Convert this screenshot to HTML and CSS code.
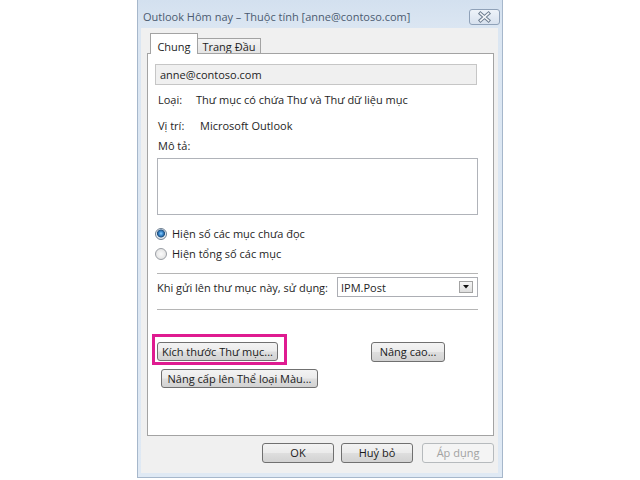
FILE: index.html
```html
<!DOCTYPE html>
<html lang="vi">
<head>
<meta charset="utf-8">
<title>Outlook Hôm nay – Thuộc tính</title>
<link rel="stylesheet" href="styles.css">
</head>
<body>
<div class="window">
  <div class="titlebar">
    <span class="title">Outlook Hôm nay – Thuộc tính [anne@contoso.com]</span>
    <span class="close">
      <svg width="31" height="16" viewBox="0 0 31 16">
        <path d="M11.5 4.5 L19.5 11.5 M19.5 4.5 L11.5 11.5" stroke="#6d7d90" stroke-width="3.6" stroke-linecap="square" fill="none"/>
        <path d="M11.5 4.5 L19.5 11.5 M19.5 4.5 L11.5 11.5" stroke="#f4f6f9" stroke-width="1.6" stroke-linecap="square" fill="none"/>
      </svg>
    </span>
  </div>
  <div class="client">
    <div class="tabs">
      <div class="tab tab-active">Chung</div>
      <div class="tab tab-idle">Trang Đầu</div>
    </div>
    <div class="panel">
      <div class="field">anne@contoso.com</div>
      <div class="info info-type"><span class="lbl lbl-type">Loại:</span><span>Thư mục có chứa Thư và Thư dữ liệu mục</span></div>
      <div class="info info-loc"><span class="lbl lbl-loc">Vị trí:</span><span>Microsoft Outlook</span></div>
      <div class="info desc-label">Mô tả:</div>
      <div class="textarea"></div>
      <div class="radio radio-first"><span class="dot dot-on"></span>Hiện số các mục chưa đọc</div>
      <div class="radio radio-second"><span class="dot"></span>Hiện tổng số các mục</div>
      <div class="sep sep-first"></div>
      <div class="post">
        <span class="post-label">Khi gửi lên thư mục này, sử dụng:</span>
        <div class="combo">
          <span>IPM.Post</span>
          <span class="combo-btn">
            <svg width="14" height="11" viewBox="0 0 14 11"><path d="M4 4 L10 4 L7 7.5 Z" fill="#111"/></svg>
          </span>
        </div>
      </div>
      <div class="sep sep-second"></div>
      <div class="btnrow">
        <div class="highlight"><span class="btn btn-size">Kích thước Thư mục...</span></div>
        <span class="btn btn-adv">Nâng cao...</span>
      </div>
      <span class="btn btn-color">Nâng cấp lên Thể loại Màu...</span>
    </div>
    <div class="footer">
      <span class="btn btn-foot">OK</span>
      <span class="btn btn-foot btn-cancel">Huỷ bỏ</span>
      <span class="btn btn-foot btn-disabled">Áp dụng</span>
    </div>
  </div>
</div>
</body>
</html>
```

FILE: styles.css
```css
html, body {
  margin: 0;
  padding: 0;
  background: #ffffff;
}

body {
  font-family: "Open Sans", "Noto Sans", "DejaVu Sans", sans-serif;
  font-size: 11px;
  color: #1e1e1e;
}

.window {
  margin-left: 137px;
  width: 366px;
  height: 478px;
  box-sizing: border-box;
  border: 1px solid #a6b7cb;
  border-top: 0;
  background: linear-gradient(#d3e0ef 0px, #dbe6f2 28px, #dfe9f4 100%);
  padding: 0 4px 4px 3px;
  display: flex;
  flex-direction: column;
}

.titlebar {
  height: 28px;
  display: flex;
  align-items: flex-start;
  justify-content: space-between;
  margin-right: -2px;
}

.title {
  margin-top: 9px;
  margin-left: 2px;
  font-size: 11px;
  line-height: 16px;
  color: #4b5b70;
}

.close {
  margin-top: 9px;
  width: 31px;
  height: 16px;
  box-sizing: border-box;
  border: 1px solid #8fa1b8;
  border-radius: 3px;
  background: linear-gradient(#eef3f9, #d7e1ee);
  display: flex;
  align-items: center;
  justify-content: center;
}

.close svg {
  display: block;
  margin: -1px;
}

.client {
  flex: 1;
  background: #f0f0f0;
  display: flex;
  flex-direction: column;
  padding: 5px 4px 0 6px;
}

.tabs {
  display: flex;
  align-items: flex-end;
  height: 20px;
  padding-left: 3px;
}

.tab {
  box-sizing: border-box;
  border: 1px solid #a3a3a3;
  border-bottom: 0;
  text-align: center;
}

.tab-active {
  width: 48px;
  height: 21px;
  margin-bottom: -1px;
  padding-top: 5px;
  line-height: 16px;
  background: #ffffff;
  position: relative;
  z-index: 1;
}

.tab-idle {
  width: 64px;
  height: 15px;
  margin-left: -1px;
  padding-top: 1px;
  line-height: 14px;
  background: linear-gradient(#f4f4f4, #e4e4e4);
}

.panel {
  flex: 1;
  background: #ffffff;
  border: 1px solid #a3a3a3;
  padding: 0 16px 0 8px;
  display: flex;
  flex-direction: column;
  align-items: flex-start;
}

.field {
  margin-top: 10px;
  margin-left: -1px;
  width: 322px;
  height: 21px;
  box-sizing: border-box;
  border: 1px solid #c6c6c6;
  background: #f0f0f0;
  padding-left: 4px;
  line-height: 19px;
}

.info {
  line-height: 16px;
  display: flex;
}

.info-type {
  margin-top: 7px;
  padding-left: 2px;
}

.info-loc {
  margin-top: 10px;
  padding-left: 2px;
}

.lbl-type {
  width: 38px;
}

.lbl-loc {
  width: 42px;
}

.desc-label {
  margin-top: 4px;
  padding-left: 2px;
}

.textarea {
  margin-top: 4px;
  margin-left: 1px;
  width: 321px;
  height: 57px;
  box-sizing: border-box;
  border: 1px solid #b0b3b9;
  background: #ffffff;
}

.radio {
  display: flex;
  align-items: center;
  line-height: 16px;
  height: 16px;
  margin-left: -1px;
}

.radio-first {
  margin-top: 11px;
}

.radio-second {
  margin-top: 4px;
}

.dot {
  width: 12px;
  height: 12px;
  box-sizing: border-box;
  border-radius: 50%;
  border: 1px solid #9a9ea4;
  background: radial-gradient(circle at 50% 50%, #fbfbfb 0, #dcdcdc 100%);
  margin-right: 5px;
}

.dot-on {
  border-color: #6d7f92;
  background: radial-gradient(circle at 50% 45%, #8fd0ff 0, #3e8fd6 1.8px, #1c4f80 3.6px, #e9eef3 4.4px, #d4dbe3 100%);
}

.sep {
  width: 321px;
  height: 0;
  margin-left: 1px;
  border-top: 1px solid #b5b5b5;
  border-bottom: 1px solid #ffffff;
}

.sep-first {
  margin-top: 11px;
}

.sep-second {
  margin-top: 12px;
}

.post {
  margin-top: 2px;
  margin-left: 1px;
  width: 321px;
  display: flex;
  align-items: center;
  justify-content: space-between;
}

.combo {
  width: 141px;
  height: 20px;
  box-sizing: border-box;
  border: 1px solid #acaeb4;
  background: #ffffff;
  display: flex;
  align-items: center;
  justify-content: space-between;
  padding: 0 4px 0 3px;
}

.combo-btn {
  width: 14px;
  height: 12px;
  box-sizing: border-box;
  border: 1px solid #a3a3a3;
  background: linear-gradient(#f6f6f6, #dedede);
  display: flex;
}

.combo-btn svg {
  display: block;
  margin: -1px;
}

.btnrow {
  margin-top: 23px;
  margin-left: -4px;
  display: flex;
  align-items: flex-start;
}

.highlight {
  width: 135px;
  height: 31px;
  box-sizing: border-box;
  border: 3px solid #df1b90;
  padding: 5px 0 0 2px;
}

.btn {
  box-sizing: border-box;
  display: flex;
  align-items: center;
  justify-content: center;
  height: 20px;
  border: 1px solid #707070;
  border-radius: 3px;
  background: linear-gradient(#f3f3f3 0%, #ebebeb 48%, #dedede 52%, #d2d2d2 100%);
  color: #1a1a1a;
  line-height: 16px;
  white-space: nowrap;
}

.btn-size {
  width: 121px;
  height: 19px;
}

.btn-adv {
  width: 74px;
  margin-top: 8px;
  margin-left: 84px;
}

.btn-color {
  margin-top: 4px;
  margin-left: 5px;
  width: 157px;
  height: 19px;
}

.footer {
  height: 37px;
  display: flex;
  justify-content: flex-end;
  align-items: flex-start;
  padding-top: 7px;
  box-sizing: border-box;
}

.btn-foot {
  width: 72px;
  margin-left: 7px;
}

.btn-disabled {
  margin-left: 9px;
  border-color: #b6babd;
  background: #f4f4f4;
  color: #a2a2a2;
}
```
